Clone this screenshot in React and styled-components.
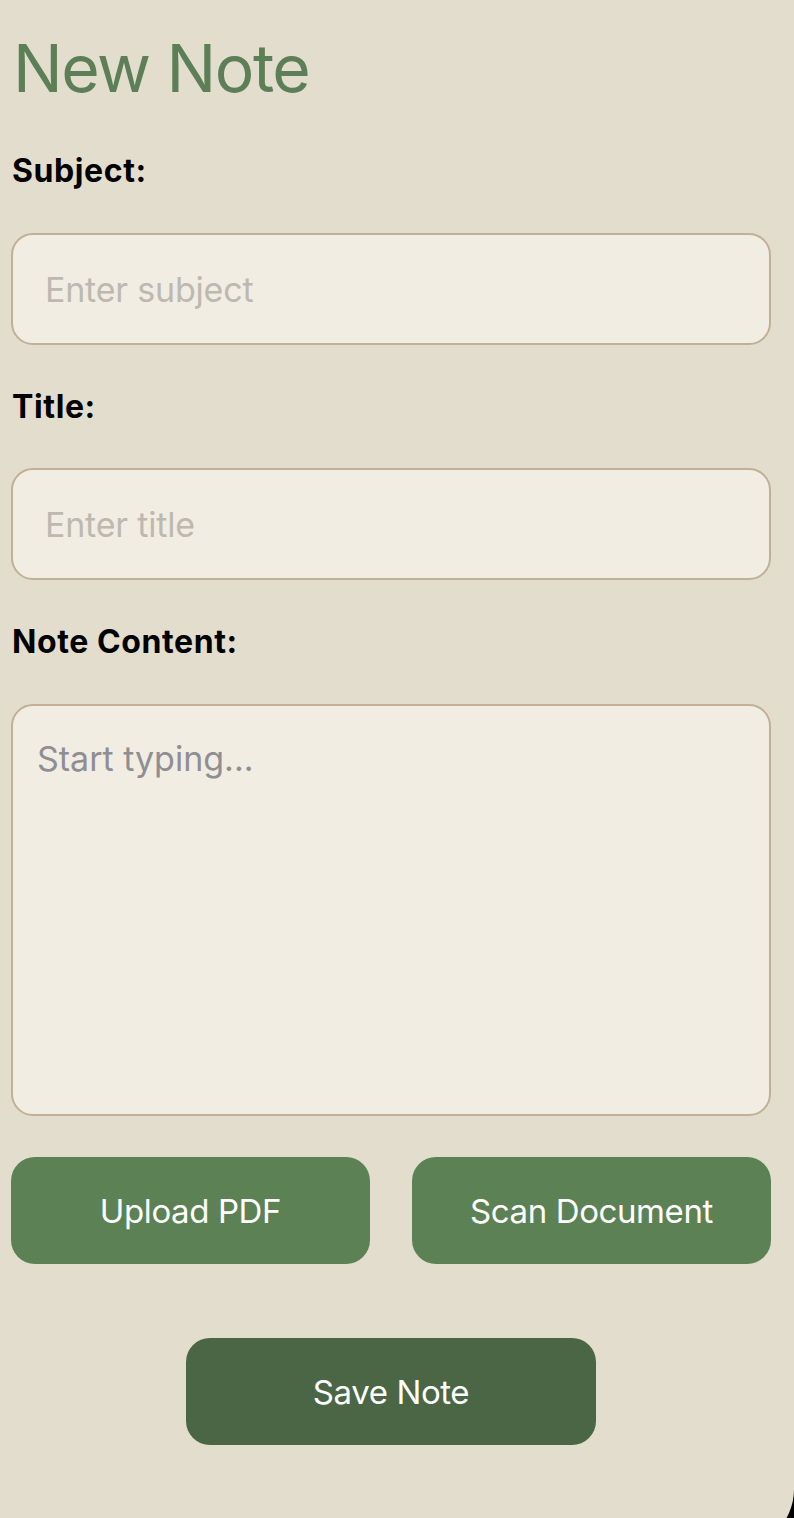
import React from "react";
import styled, { createGlobalStyle } from "styled-components";

const GlobalStyle = createGlobalStyle`
    html, body {
        margin: 0;
        padding: 0;
        height: 100%;
        overflow: hidden;
        background-color: #e3ddcd;
    }

    body {
        font-family: Inter, "Noto Sans", "Liberation Sans", sans-serif;
    }

    * {
        box-sizing: border-box;
    }
`

const Screen = styled.div`
    min-height: 1518px;
    background-color: #e3ddcd;
    padding: 28px 23px 0 11px;
    display: flex;
    flex-direction: column;
`

const Heading = styled.h1`
    margin: 0 0 44px 2px;
    font-size: 66px;
    line-height: 80px;
    font-weight: 400;
    letter-spacing: -1.5px;
    color: #5d7f57;
`

const Label = styled.label`
    display: block;
    margin: 0 0 ${props => props.gap || 43}px 1px;
    font-size: 32px;
    line-height: 38px;
    font-weight: 700;
    letter-spacing: 0.6px;
    color: #000;
`

const Field = styled.input`
    width: 100%;
    height: 112px;
    margin-bottom: 43px;
    padding: 0 32px;
    border: 2px solid #c1af97;
    border-radius: 22px;
    background-color: #f1ede2;
    font-family: inherit;
    font-size: 34px;
    letter-spacing: -0.2px;
    color: #222;
    outline: none;

    &::placeholder {
        color: #bdb9b1;
        opacity: 1;
    }
`

const Content = styled.textarea`
    width: 100%;
    height: 412px;
    margin: 0 0 41px 0;
    padding: 32px 24px;
    border: 2px solid #c1af97;
    border-radius: 22px;
    background-color: #f1ede2;
    font-family: inherit;
    font-size: 34px;
    line-height: 41px;
    color: #222;
    resize: none;
    outline: none;

    &::placeholder {
        color: #8f8e93;
        opacity: 1;
    }
`

const ButtonRow = styled.div`
    display: grid;
    grid-template-columns: 1fr 1fr;
    column-gap: 42px;
    margin-bottom: 74px;
`

const Button = styled.button`
    height: 107px;
    width: ${props => props.wide ? "410px" : "100%"};
    align-self: ${props => props.wide ? "center" : "stretch"};
    border: none;
    border-radius: 24px;
    background-color: ${props => props.dark ? "#4a6645" : "#5c8154"};
    color: #fff;
    font-family: inherit;
    font-size: 33px;
    font-weight: 400;
    letter-spacing: -0.4px;
    cursor: pointer;
`

// the device's rounded screen corner, visible at the bottom right of the capture
const ScreenCorner = styled.div`
    position: fixed;
    right: 0;
    bottom: 0;
    width: 20px;
    height: 29px;
    overflow: hidden;
    pointer-events: none;

    &::before {
        content: "";
        position: absolute;
        left: -100px;
        top: -60px;
        width: 120px;
        height: 120px;
        border-radius: 50%;
        box-shadow: 0 0 0 100px #000;
    }
`

const App = () => {
    return (
        <>
        <GlobalStyle />
        <Screen>
            <Heading>New Note</Heading>
            <Label htmlFor="subject">Subject:</Label>
            <Field id="subject" placeholder="Enter subject" />
            <Label htmlFor="title" gap={42}>Title:</Label>
            <Field id="title" placeholder="Enter title" />
            <Label htmlFor="content">Note Content:</Label>
            <Content id="content" placeholder="Start typing..." />
            <ButtonRow>
                <Button>Upload PDF</Button>
                <Button>Scan Document</Button>
            </ButtonRow>
            <Button wide dark>Save Note</Button>
        </Screen>
        <ScreenCorner />
        </>
    )
}

export default App
